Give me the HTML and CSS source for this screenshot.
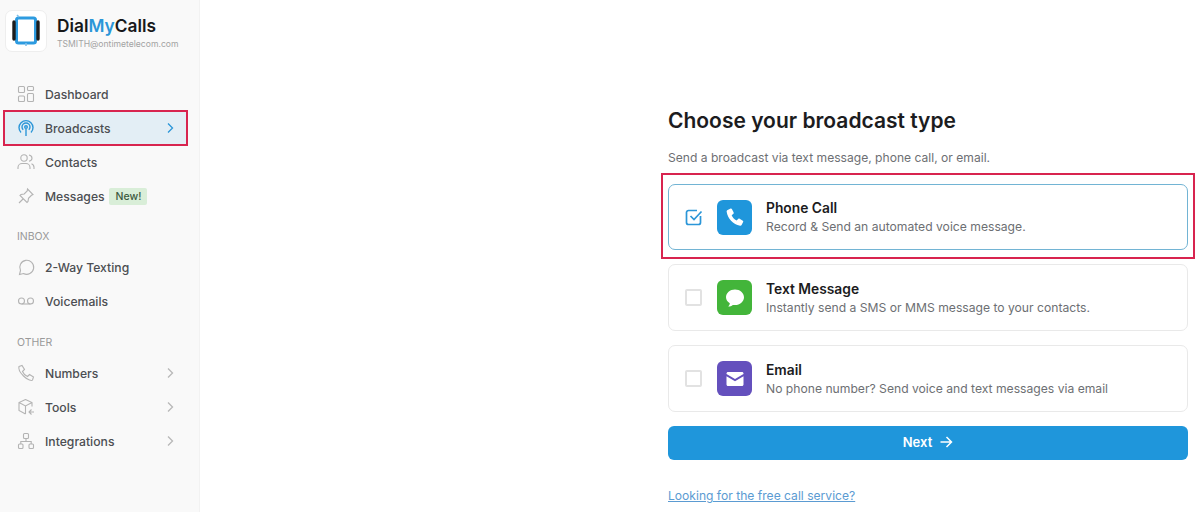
FILE: index.html
```html
<!DOCTYPE html>
<html lang="en">
<head>
    <meta charset="UTF-8">
    <title>Choose your broadcast type</title>
    <link rel="stylesheet" href="styles.css">
</head>
<body>
<div class="app">
    <aside class="sidebar">
        <div class="brand">
            <div class="brand_logo">
                <svg width="30" height="34" viewBox="0 0 30 34" fill="none">
                    <rect x="5.500" y="4" width="19" height="25" rx="2" stroke="#2d9be0" stroke-width="3"/>
                    <path d="M3 8v17M27 8v17" stroke="#1c1c1c" stroke-width="3.400" stroke-linecap="round"/>
                    <path d="M15 29v3M6 1l2 2" stroke="#7fc0ea" stroke-width="1.600"/>
                </svg>
            </div>
            <div class="brand_text">
                <div class="brand_name">Dial<span>My</span>Calls</div>
                <div class="brand_mail">TSMITH@ontimetelecom.com</div>
            </div>
        </div>
        <ul class="nav">
            <li>
                <svg class="ico" viewBox="0 0 18 18"><rect x="1.500" y="1.500" width="6" height="6" rx="1"/><rect x="10.500" y="1.500" width="6" height="4" rx="1"/><rect x="1.500" y="11" width="6" height="5.500" rx="1"/><rect x="10.500" y="8.500" width="6" height="8" rx="1"/></svg>
                Dashboard
            </li>
            <li class="active">
                <svg class="ico" viewBox="0 0 18 18"><path d="M4 13.500a7 7 0 1 1 10 0"/><path d="M6.200 10.800a4 4 0 1 1 5.600 0"/><circle cx="9" cy="8" r="1.300"/><path d="M9 10v7"/></svg>
                Broadcasts
                <svg class="chev" viewBox="0 0 10 12"><path d="M3 1.500 7.500 6 3 10.500"/></svg>
            </li>
            <li>
                <svg class="ico" viewBox="0 0 18 18"><circle cx="7" cy="5" r="3.200"/><path d="M1 16v-1.500C1 12 3 10.500 5 10.500h4c2 0 4 1.500 4 4V16M12 2c2 .4 3 1.700 3 3.200S14 7.800 12 8.200M14.500 10.700c1.500.5 2.500 2 2.500 3.800V16"/></svg>
                Contacts
            </li>
            <li>
                <svg class="ico" viewBox="0 0 18 18"><path d="M10.500 2 16 7.500l-1.500.8-3 3-.5 3.200-1 1L3 8.500l1-1 3.200-.5 3-3zM6 12l-4 4"/></svg>
                Messages
                <span class="badge">New!</span>
            </li>
        </ul>
        <div class="nav_title first">INBOX</div>
        <ul class="nav">
            <li>
                <svg class="ico" viewBox="0 0 18 18"><path d="M2.500 16.500 3.500 12.500A7 7 0 1 1 6.500 15.500z"/></svg>
                2-Way Texting
            </li>
            <li>
                <svg class="ico" viewBox="0 0 18 18"><circle cx="4.500" cy="9" r="3"/><circle cx="13.500" cy="9" r="3"/><path d="M4.500 12h9"/></svg>
                Voicemails
            </li>
        </ul>
        <div class="nav_title second">OTHER</div>
        <ul class="nav">
            <li>
                <svg class="ico" viewBox="0 0 18 18"><path d="M2 2.500 5 1.500l2.500 4-2 2c1 2.500 2.500 4 5 5l2-2 4 2.500-1 3C15 17 11 16.500 6.500 12S1.500 4 2 2.500z"/></svg>
                Numbers
                <svg class="chev" viewBox="0 0 10 12"><path d="M3 1.500 7.500 6 3 10.500"/></svg>
            </li>
            <li>
                <svg class="ico" viewBox="0 0 18 18"><path d="M8.500 1.500 15 4.500v4M8.500 1.500 2 4.500v8l6.500 3.500M2 4.500 8.500 8l6.500-3.500M8.500 8v8M12 14h5M14.500 11.500 12 14l2.500 2.500"/></svg>
                Tools
                <svg class="chev" viewBox="0 0 10 12"><path d="M3 1.500 7.500 6 3 10.500"/></svg>
            </li>
            <li>
                <svg class="ico" viewBox="0 0 18 18"><rect x="6.500" y="1.500" width="5" height="5" rx="1"/><rect x="1.500" y="12" width="4.500" height="4.500" rx="1"/><rect x="12" y="12" width="4.500" height="4.500" rx="1"/><path d="M9 6.500v3M3.800 12V9.500h10.400V12"/></svg>
                Integrations
                <svg class="chev" viewBox="0 0 10 12"><path d="M3 1.500 7.500 6 3 10.500"/></svg>
            </li>
        </ul>
    </aside>
    <main class="main">
        <section class="panel">
            <h1>Choose your broadcast type</h1>
            <p class="lead">Send a broadcast via text message, phone call, or email.</p>
            <div class="option selected">
                <svg class="check" viewBox="0 0 18 18" fill="none"><path d="M15.500 8v6.500a2 2 0 0 1-2 2h-10a2 2 0 0 1-2-2v-10a2 2 0 0 1 2-2H12" stroke="#2b96d8" stroke-width="1.700"/><path d="M5.500 8l3.500 3.500 7.500-8" stroke="#2b96d8" stroke-width="1.700"/></svg>
                <div class="tile blue">
                    <svg width="21" height="21" viewBox="0 0 20 20"><path fill="#fff" d="M3.500 2.800 6.300 1.500c.5-.2 1 0 1.200.4l1.700 3.300c.2.400.1.900-.2 1.200L7.300 7.800c.8 2 2.400 3.800 4.700 5l1.700-1.500c.3-.3.800-.3 1.200-.1l3 1.900c.4.300.6.800.3 1.300l-1.300 2.600c-.3.600-.9.900-1.600.8C8.800 17 3.300 11 2.500 4.400c-.1-.7.300-1.300 1-1.600z"/></svg>
                </div>
                <div>
                    <div class="option_name">Phone Call</div>
                    <div class="option_desc">Record &amp; Send an automated voice message.</div>
                </div>
            </div>
            <div class="option">
                <span class="box"></span>
                <div class="tile green">
                    <svg width="20" height="20" viewBox="0 0 20 20"><path fill="#fff" d="M10 1.500c5 0 9 3.500 9 7.800s-4 7.800-9 7.800c-.8 0-1.500-.1-2.200-.2-1.200 1-2.800 1.600-4.600 1.600 1-.9 1.500-2 1.600-3.200C2.500 13.900 1 11.700 1 9.300 1 5 5 1.500 10 1.500z"/></svg>
                </div>
                <div>
                    <div class="option_name">Text Message</div>
                    <div class="option_desc">Instantly send a SMS or MMS message to your contacts.</div>
                </div>
            </div>
            <div class="option">
                <span class="box"></span>
                <div class="tile purple">
                    <svg width="20" height="20" viewBox="0 0 20 20"><path fill="#fff" d="M1.500 4.500c0-.8.700-1.500 1.500-1.500h14c.8 0 1.500.7 1.500 1.500v.6L10 10 1.500 5.100z"/><path fill="#fff" d="M1.500 7.300 10 12.200l8.500-4.900v8.200c0 .8-.7 1.500-1.500 1.500H3c-.8 0-1.500-.7-1.500-1.500z"/></svg>
                </div>
                <div>
                    <div class="option_name">Email</div>
                    <div class="option_desc">No phone number? Send voice and text messages via email</div>
                </div>
            </div>
            <button class="next">
                Next
                <svg width="14" height="14" viewBox="0 0 14 14" fill="none"><path d="M1.500 7h11M7.500 2l5 5-5 5" stroke="#fff" stroke-width="1.500"/></svg>
            </button>
            <a class="free" href="#">Looking for the free call service?</a>
        </section>
    </main>
</div>
</body>
</html>
```

FILE: styles.css
```css
*{
    margin:0;
    padding:0;
    box-sizing:border-box;
}
html,body{
    height:100%;
    overflow:hidden;
}
body{
    background:#fff;
    color:#1c1c1e;
    font-family:Inter,"Liberation Sans",sans-serif;
}
li{
    list-style:none;
}
.app{
    display:flex;
    height:512px;
}
.sidebar{
    width:200px;
    flex:none;
    padding:10px 12px 0 4px;
    background:#f9f9f9;
    border-right:1px solid #f2f2f2;
}
.brand{
    display:flex;
    align-items:center;
    gap:10px;
    margin-bottom:25px;
    padding-left:1px;
}
.brand_logo{
    display:flex;
    align-items:center;
    justify-content:center;
    width:42px;
    height:42px;
    background:#fff;
    border:1px solid #eee;
    border-radius:7px;
}
.brand_text{
    padding-top:3px;
}
.brand_name{
    font-size:17.300px;
    font-weight:600;
    line-height:21px;
    color:#17181a;
}
.brand_name span{
    color:#2b96d8;
}
.brand_mail{
    margin-top:3px;
    font-size:8.600px;
    line-height:11px;
    color:#a3a3a3;
    white-space:nowrap;
}
.nav li{
    position:relative;
    display:flex;
    align-items:center;
    height:34px;
    padding:0 13px;
    font-size:12.200px;
    font-weight:500;
    color:#4c4e52;
}
.nav li.active{
    background:#e3eef5;
}
.nav li.active::after{
    content:"";
    position:absolute;
    inset:-1px;
    border:2px solid #d8244f;
}
.ico{
    flex:none;
    width:18px;
    height:18px;
    margin-right:10px;
    fill:none;
    stroke:#b4b4b4;
    stroke-width:1.100;
}
.active .ico{
    stroke:#2b96d8;
    stroke-width:1.400;
}
.chev{
    width:10px;
    height:12px;
    margin-left:auto;
    margin-right:-1px;
    fill:none;
    stroke:#b8b8b8;
    stroke-width:1.300;
}
.active .chev{
    stroke:#2b96d8;
}
.badge{
    margin-left:4px;
    padding:0 6px 0 7px;
    font-size:10.500px;
    line-height:17px;
    color:#3d5a40;
    background:#d9eed8;
    border-radius:2px;
}
.nav_title{
    margin:16px 0 0 13px;
    height:22px;
    font-size:10.500px;
    line-height:15px;
    color:#9a9a9a;
}
.nav_title.first{
    height:21px;
}
.nav_title.second{
    margin-top:17px;
    height:21px;
}
.main{
    flex:1;
    padding:107px 12px 0 0;
}
.panel{
    width:520px;
    margin-left:auto;
}
h1{
    font-size:21px;
    font-weight:600;
    line-height:28px;
    color:#1c1c1e;
}
.lead{
    margin-top:15px;
    margin-bottom:18px;
    font-size:12.100px;
    line-height:16px;
    color:#6d6f73;
}
.option{
    position:relative;
    display:flex;
    align-items:center;
    height:67px;
    margin-bottom:14px;
    padding-left:16px;
    background:#fff;
    border:1px solid #e9e9e9;
    border-radius:7px;
}
.option.selected{
    height:66px;
    border-color:#72b4d4;
}
.option.selected::after{
    content:"";
    position:absolute;
    inset:-12px -8px -10px -8px;
    border:2px solid #d8244f;
}
.check{
    width:18px;
    height:18px;
    margin-right:14px;
}
.box{
    width:17px;
    height:17px;
    margin-right:15px;
    border:2px solid #e2e2e2;
    border-radius:2px;
}
.tile{
    display:flex;
    align-items:center;
    justify-content:center;
    width:35px;
    height:35px;
    margin-right:14px;
    border-radius:6px;
}
.blue{
    background:#1f96db;
}
.green{
    background:#43b53a;
}
.purple{
    background:#6450bd;
}
.option_name{
    font-size:13.800px;
    font-weight:600;
    line-height:18px;
    color:#1c1c1e;
}
.option_desc{
    margin-top:2px;
    font-size:12.150px;
    line-height:16px;
    color:#6d6f73;
}
.next{
    display:flex;
    align-items:center;
    justify-content:center;
    gap:7px;
    width:100%;
    height:34px;
    padding-bottom:2px;
    font:600 13px Inter,"Liberation Sans",sans-serif;
    color:#fff;
    background:#1f96db;
    border:0;
    border-radius:6px;
}
.free{
    display:block;
    margin-top:28px;
    font-size:12.100px;
    line-height:16px;
    color:#5b9bd2;
    text-decoration:underline;
}
```
